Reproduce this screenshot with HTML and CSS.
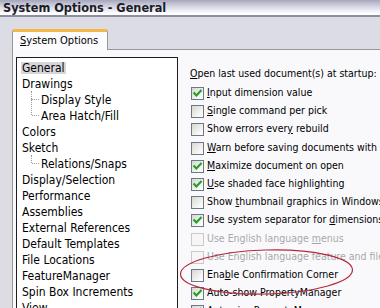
FILE: index.html
```html
<!DOCTYPE html>
<html lang="en">
<head>
	<title>System Options - General</title>
	<meta charset="utf-8">
	<link rel="stylesheet" href="styles.css">
</head>
<body>
	<svg class="defs" width="0" height="0">
		<symbol id="tick" viewBox="0 0 11 11">
			<path d="M2.3 5.2 L4.4 7.4 L8.8 2.8" fill="none" stroke="#21a121" stroke-width="2.1" stroke-linecap="square"/>
		</symbol>
	</svg>

	<section class="dialog">
		<header class="titleBar">System Options - General</header>

		<nav class="tabStrip">
			<div class="tab"><u>S</u>ystem Options</div>
		</nav>

		<section class="main">
			<div class="gutter"></div>
			<div class="panel">
				<!-- page tree -->
				<ul class="tree">
					<li><span class="label selected">General</span></li>
					<li><span class="label">Drawings</span></li>
					<li class="child"><span class="label">Display Style</span></li>
					<li class="child"><span class="label">Area Hatch/Fill</span></li>
					<li><span class="label">Colors</span></li>
					<li><span class="label">Sketch</span></li>
					<li class="child"><span class="label">Relations/Snaps</span></li>
					<li><span class="label">Display/Selection</span></li>
					<li><span class="label">Performance</span></li>
					<li><span class="label">Assemblies</span></li>
					<li><span class="label">External References</span></li>
					<li><span class="label">Default Templates</span></li>
					<li><span class="label">File Locations</span></li>
					<li><span class="label">FeatureManager</span></li>
					<li><span class="label">Spin Box Increments</span></li>
					<li><span class="label">View</span></li>
				</ul>

				<!-- options -->
				<div class="options">
					<div class="optionHead"><u>O</u>pen last used document(s) at startup:</div>
					<div class="option"><span class="check on"><svg><use href="#tick"/></svg></span><span><u>I</u>nput dimension value</span></div>
					<div class="option"><span class="check"></span><span><u>S</u>ingle command per pick</span></div>
					<div class="option"><span class="check"></span><span>Show errors ever<u>y</u> rebuild</span></div>
					<div class="option"><span class="check"></span><span><u>W</u>arn before saving documents with update-required references</span></div>
					<div class="option"><span class="check on"><svg><use href="#tick"/></svg></span><span><u>M</u>aximize document on open</span></div>
					<div class="option"><span class="check on"><svg><use href="#tick"/></svg></span><span><u>U</u>se shaded face highlighting</span></div>
					<div class="option"><span class="check"></span><span>Show <u>t</u>humbnail graphics in Windows Explorer</span></div>
					<div class="option"><span class="check on"><svg><use href="#tick"/></svg></span><span>Use system separator for <u>d</u>imensions</span></div>
					<div class="option disabled"><span class="check"></span><span>Use English language <u>m</u>enus</span></div>
					<div class="option disabled"><span class="check"></span><span>Use English language feature and file names</span></div>
					<div class="option"><span class="check"></span><span>Ena<u>b</u>le Confirmation Corner</span></div>
					<div class="option"><span class="check on"><svg><use href="#tick"/></svg></span><span>Auto-show PropertyManager</span></div>
					<div class="option"><span class="check on"><svg><use href="#tick"/></svg></span><span>Auto-size PropertyManager panes</span></div>
				</div>
			</div>
		</section>
	</section>

	<!-- hand drawn red circle -->
	<svg class="markup" viewBox="0 0 380 308">
		<ellipse cx="266.5" cy="272" rx="86" ry="22" transform="rotate(-1.5 266.5 272)"/>
	</svg>
</body>
</html>
```
FILE: styles.css
```css
html, body{ width:380px; height:308px; margin:0; overflow:hidden; }
body{
	position:relative;
	font-family:"DejaVu Sans Condensed","DejaVu Sans",sans-serif;
	font-stretch:condensed;
	color:#000;
	background-color:#dcdce4;
}
u{ text-decoration-thickness:1px; text-underline-offset:1px; }
.defs{ position:absolute; }

.dialog{ display:flex; flex-direction:column; height:100%; }

.titleBar{
	height:15px; line-height:16px;
	padding-left:3px;
	font-weight:bold; font-size:12.6px;
	color:#1c1c28;
	background:linear-gradient(#a6a6be 0px, #c4c4d4 4px, #e4e4ee 9px, #fcfcfe 13px, #ffffff 15px);
	border-bottom:2px solid #8e8ea0;
}

.tabStrip{
	height:32px;
	display:flex; align-items:flex-end;
	padding-left:12px;
	background-color:#dcdce4;
}
.tab{
	position:relative; z-index:1;
	width:87px; height:18px;
	margin-bottom:-1px;
	padding-left:7px;
	font-size:11px; line-height:18px;
	background-color:#fcfcfe;
	border:1px solid #919b9c; border-bottom:none;
	border-top:3px solid #f4b848;
	border-radius:3px 3px 0 0;
}

.main{ flex:1; display:flex; min-height:0; }
.gutter{ width:12px; background-color:#dcdce2; }
.panel{
	flex:1; display:flex; min-width:0;
	padding-left:3px;
	background-color:#f9f9fc;
	border-left:1px solid #919b9c;
	border-top:1px solid #919b9c;
}

.tree{
	list-style:none;
	width:160px; height:260px;
	margin:7px 0 0 0;
	padding:1px 0 0 0;
	background-color:#fff;
	border:1px solid #1e1e1e;
	font-size:12px; line-height:16px;
}
.tree li{ position:relative; height:16px; padding-left:4px; white-space:nowrap; }
.tree li.child{ padding-left:23px; }
.tree li.child::before{
	content:""; position:absolute;
	left:14px; top:0; height:8px;
	border-left:1px dotted #9a9a9a;
}
.tree li.child + li.child::before{ top:-8px; height:16px; }
.tree li.child::after{
	content:""; position:absolute;
	left:15px; top:8px; width:7px;
	border-top:1px dotted #9a9a9a;
}
.label{ display:inline-block; padding:0 1px; line-height:12px; vertical-align:middle; }
.label.selected{ background-color:#d6d6da; }

.options{
	flex:1; min-width:0;
	margin:14px 0 0 12px;
	font-size:10.5px;
	white-space:nowrap; overflow:hidden;
}
.optionHead{ height:19px; line-height:19px; }
.option{ height:18.2px; display:flex; align-items:center; }
.option.disabled{ color:#a8a8a8; }

.check{
	flex:none;
	width:13px; height:13px;
	box-sizing:border-box;
	margin:3px 3px 0 1px;
	border:1px solid #6c7888;
	background:linear-gradient(135deg, #d6d6d2, #f6f6f4 70%, #ffffff);
}
.check svg{ display:block; width:11px; height:11px; }
.option.disabled .check{ border-color:#cacaca; background:#f6f6f6; }

.markup{
	position:absolute; left:0; top:0;
	width:380px; height:308px;
	pointer-events:none;
}
.markup ellipse{ fill:none; stroke:#b4283c; stroke-width:1.2; }
```
